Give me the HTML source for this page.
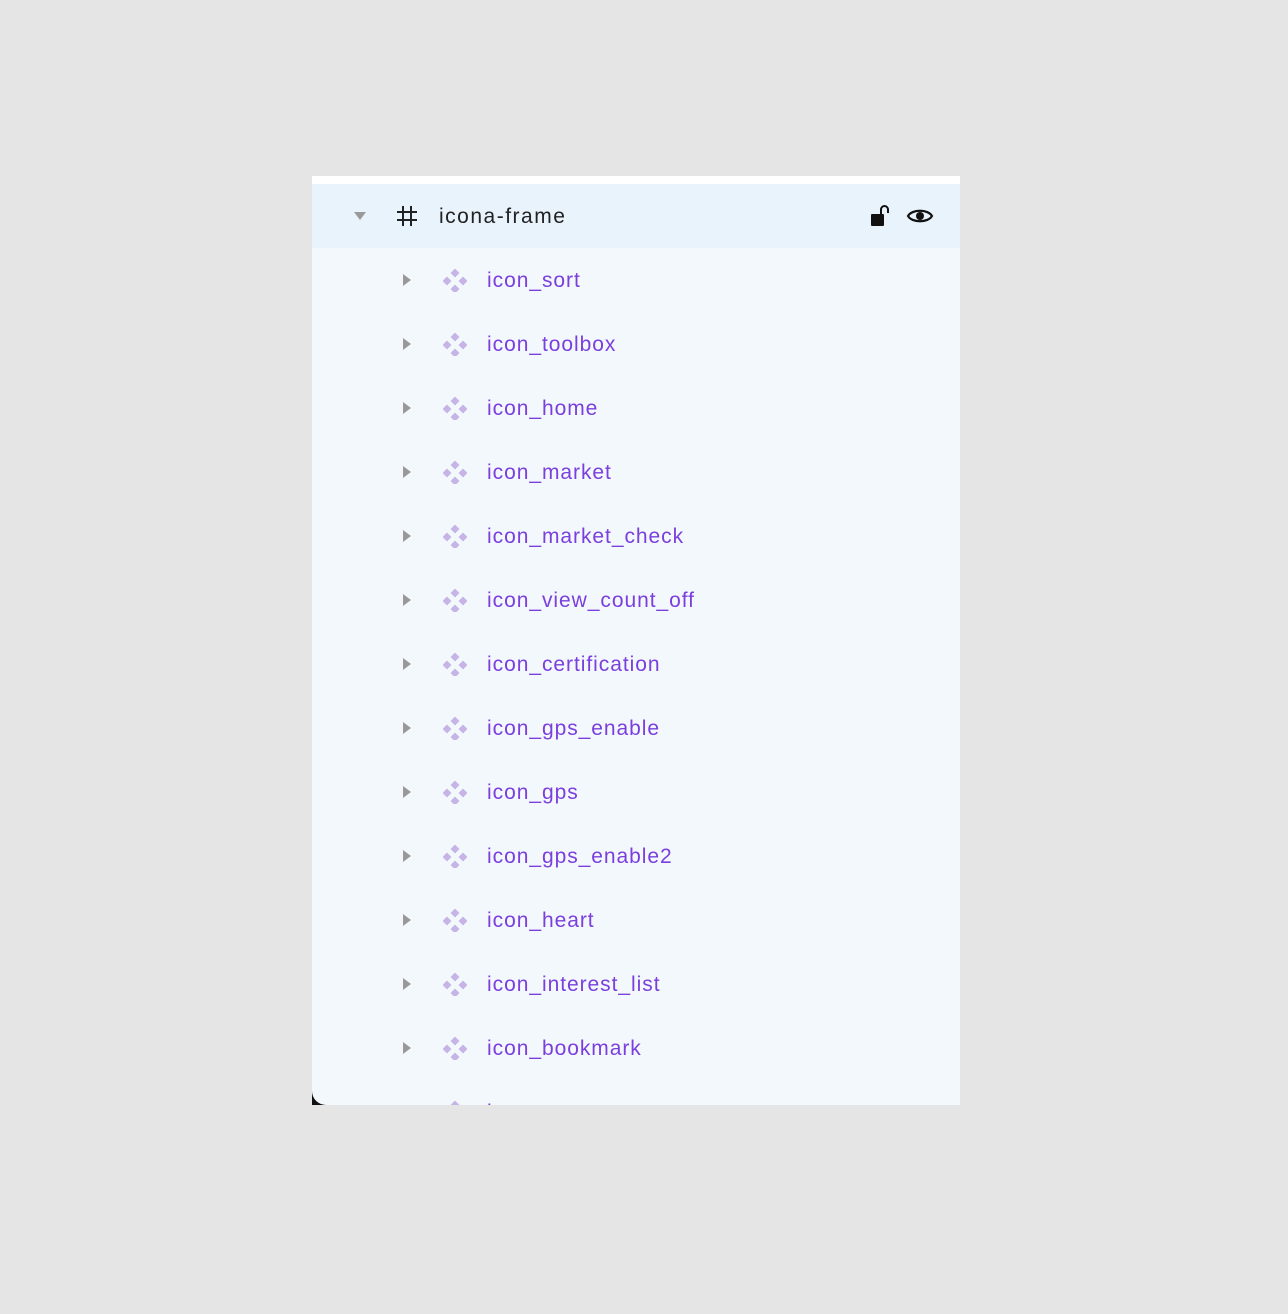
<!DOCTYPE html>
<html><head><style>
body{margin:0;width:1288px;height:1314px;background:#e5e5e5;position:relative;overflow:hidden;font-family:"Liberation Sans",sans-serif}
.blk{position:absolute;left:312px;top:1080px;width:20px;height:25px;background:#111}
.panel{position:absolute;left:312px;top:176px;width:648px;height:929px;background:#f3f8fd;overflow:hidden;border-bottom-left-radius:14px;border-top:8px solid #fff;box-sizing:border-box}
.hdr{position:absolute;left:0;top:0;width:648px;height:64px;background:#e9f3fc}
.t{position:absolute;font-size:21px;line-height:24px;white-space:nowrap;letter-spacing:0.95px}
.row{position:absolute;left:0;width:648px;height:64px}
.row .t{left:175px;top:21px;color:#7a3fdd}
.arr{position:absolute;left:91px;top:26px;width:0;height:0;border-left:8px solid #999;border-top:6px solid transparent;border-bottom:6px solid transparent}
.ic{position:absolute;left:131px;top:20px}
</style></head><body>
<div class="blk"></div>
<div class="panel">
<div class="hdr">
<div style="position:absolute;left:42px;top:28px;border-top:8px solid #999;border-left:6px solid transparent;border-right:6px solid transparent"></div>
<svg style="position:absolute;left:84px;top:21px" width="22" height="22" viewBox="0 0 22 22" stroke="#222" stroke-width="2"><path d="M7 1V21M15 1V21M1 7H21M1 15H21"/></svg>
<div class="t" style="left:127px;top:21px;color:#222;letter-spacing:1.5px">icona-frame</div>
<svg style="position:absolute;left:558px;top:19px" width="24" height="26" viewBox="0 0 24 26"><rect x="1" y="11" width="13" height="12" rx="1" fill="#111"/><path d="M11 11V6.5a3.5 3.5 0 0 1 7 0v3.5" fill="none" stroke="#111" stroke-width="2"/></svg>
<svg style="position:absolute;left:594px;top:20px" width="28" height="24" viewBox="0 0 28 24"><path d="M2 12C6 5 22 5 26 12C22 19 6 19 2 12Z" fill="none" stroke="#111" stroke-width="2.2"/><circle cx="14" cy="12" r="4" fill="#111"/></svg>
</div>
<div id="rows"></div>
</div>
<script>
var n=["icon_sort","icon_toolbox","icon_home","icon_market","icon_market_check","icon_view_count_off","icon_certification","icon_gps_enable","icon_gps","icon_gps_enable2","icon_heart","icon_interest_list","icon_bookmark","icon_retry"];
var h="";n.forEach(function(s,i){h+='<div class="row" style="top:'+(64+i*64)+'px"><div class="arr"></div><svg class="ic" width="24" height="24" viewBox="0 0 24 24" fill="#c6b4e6"><path d="M12 0.5L16.5 5L12 9.5L7.5 5Z M4 8.5L8.5 13L4 17.5L-0.5 13Z M20 8.5L24.5 13L20 17.5L15.5 13Z M12 16.5L16.5 21L12 25.5L7.5 21Z"/></svg><div class="t">'+s+'</div></div>'});
document.getElementById("rows").innerHTML=h;
</script>
</body></html>
